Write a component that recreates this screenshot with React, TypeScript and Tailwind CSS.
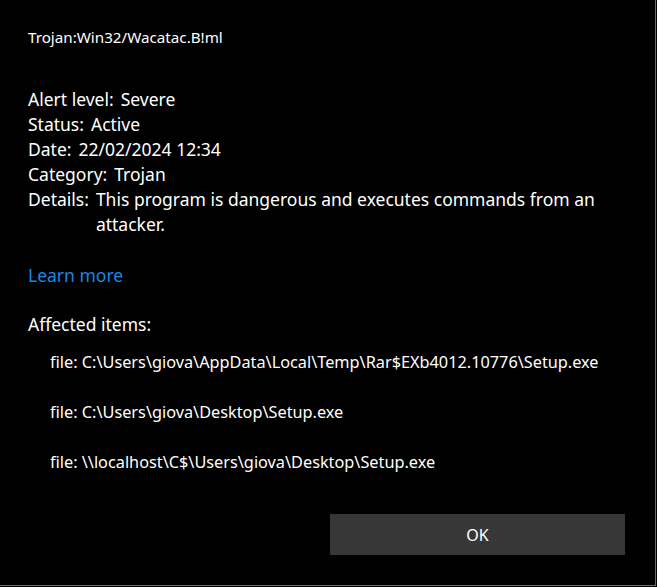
import React from 'react';

const rows = [
  { label: 'Alert level:', value: 'Severe' },
  { label: 'Status:', value: 'Active' },
  { label: 'Date:', value: '22/02/2024 12:34' },
  { label: 'Category:', value: 'Trojan' },
  { label: 'Details:', value: 'This program is dangerous and executes commands from an attacker.' },
];

const files = [
  'file: C:\\Users\\giova\\AppData\\Local\\Temp\\Rar$EXb4012.10776\\Setup.exe',
  'file: C:\\Users\\giova\\Desktop\\Setup.exe',
  'file: \\\\localhost\\C$\\Users\\giova\\Desktop\\Setup.exe',
];

export default function App() {
  return (
    <div className="min-h-screen bg-black" style={{ fontFamily: '"Noto Sans", "Open Sans", sans-serif' }}>
      <div className="w-[656px] h-[586px] bg-black border-r border-b border-[#6b6b6b] text-white flex flex-col">
        <div className="pl-[28px] pt-[27px] text-[15.2px] leading-[20px]">Trojan:Win32/Wacatac.B!ml</div>

        <div className="pl-[28px] pr-[40px] mt-[40px] text-[17.5px] leading-[25px]">
          {rows.map((r) => (
            <div key={r.label} className="flex gap-[7px]">
              <span className="shrink-0">{r.label}</span>
              <span>{r.value}</span>
            </div>
          ))}
        </div>

        <div className="pl-[28px] mt-[26px] text-[17.5px] leading-[25px] text-[#1688e6]">Learn more</div>

        <div className="pl-[28px] mt-[24px] text-[17.5px] leading-[25px]">Affected items:</div>

        <div className="pl-[50px] mt-[15px] flex flex-col gap-[30px] text-[16.3px] leading-[20px]">
          {files.map((f) => (
            <div key={f}>{f}</div>
          ))}
        </div>

        <div className="mt-auto mb-[30px] flex justify-end pr-[30px]">
          <button className="w-[295px] h-[41px] bg-[#373737] text-white text-[16px]">OK</button>
        </div>
      </div>
    </div>
  );
}
